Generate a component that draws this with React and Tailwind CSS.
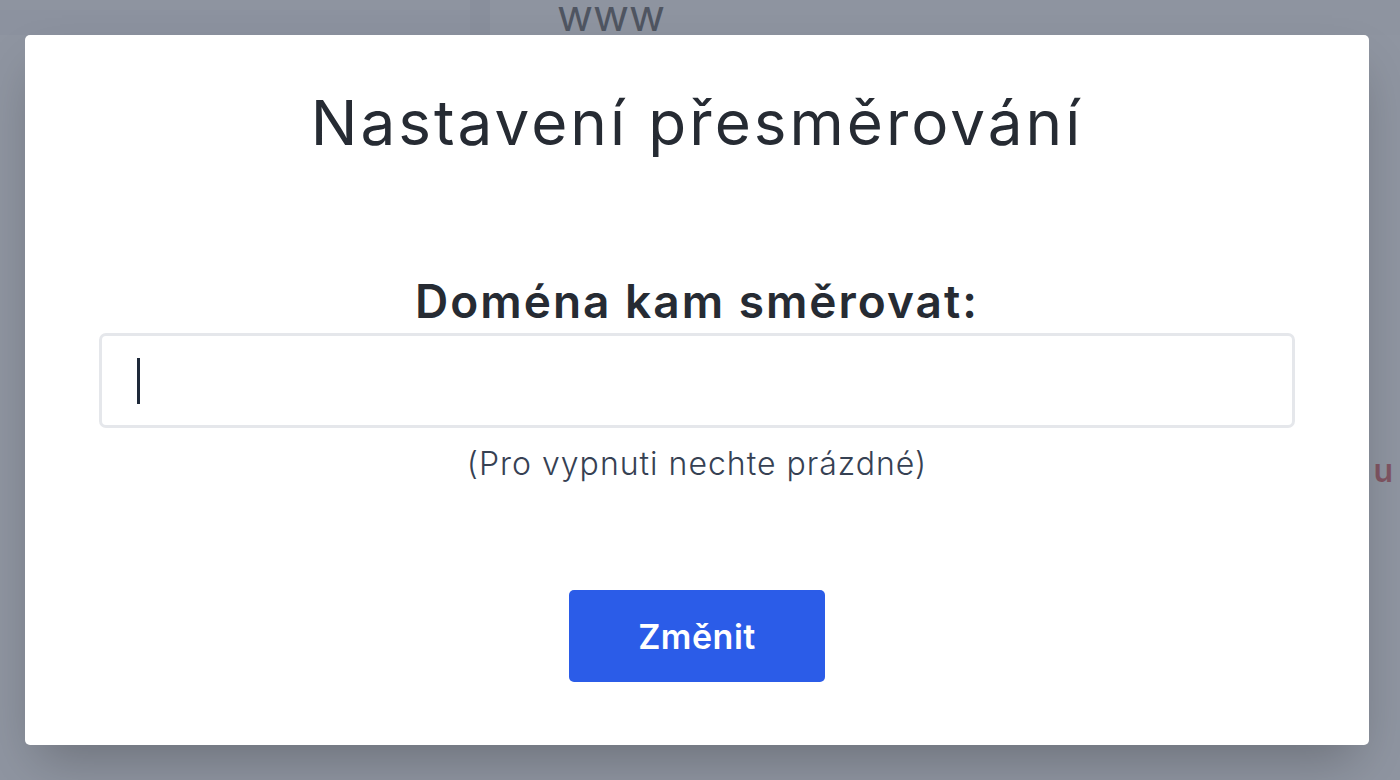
export default function App() {
  return (
    <div className="relative h-screen w-full overflow-hidden bg-white font-['Inter','Noto_Sans',sans-serif]">
      {/* page behind the dialog */}
      <div className="flex h-[35px] items-start">
        <div className="h-[35px] w-[470px] bg-gray-100 border-t-[10px] border-gray-50" />
        <div className="h-[35px] w-[20px] bg-gray-200" />
        <div className="h-[35px] flex-1 pl-[67px] pt-[2px] bg-gray-50">
          <span className="block text-[44px] leading-[26px] text-black">www</span>
        </div>
      </div>
      <div className="flex justify-end pt-[412px] pr-[7px]">
        <span className="text-[32px] font-semibold text-red-700">u</span>
      </div>

      {/* overlay */}
      <div className="absolute inset-0 bg-gray-500/75 pt-[35px] pl-[25px]">
        <div className="flex h-[710px] w-[1344px] flex-col items-center rounded-[5px] bg-white shadow-2xl">
          <h1 className="mt-[57px] text-[62px] leading-none font-normal tracking-[3px] text-[#262b33]">
            Nastavení přesměrování
          </h1>

          <label className="mt-[124px] text-[46px] leading-none font-semibold tracking-[2px] text-[#262b33]">
            Doména kam směrovat:
          </label>

          <div className="mt-[9px] flex h-[95px] w-[1196px] items-center rounded-[7px] border-[3px] border-gray-200 pl-[35px]">
            <span className="h-[46px] w-[3px] bg-gray-800" />
          </div>

          <p className="mt-[20px] text-[32px] leading-none font-light tracking-[1px] text-gray-700">
            (Pro vypnuti nechte prázdné)
          </p>

          <button className="mt-[110px] flex h-[92px] w-[256px] items-center justify-center rounded-[5px] bg-[#2b5ce8] text-[34px] font-semibold tracking-[0.5px] text-white">
            Změnit
          </button>
        </div>
      </div>
    </div>
  );
}
